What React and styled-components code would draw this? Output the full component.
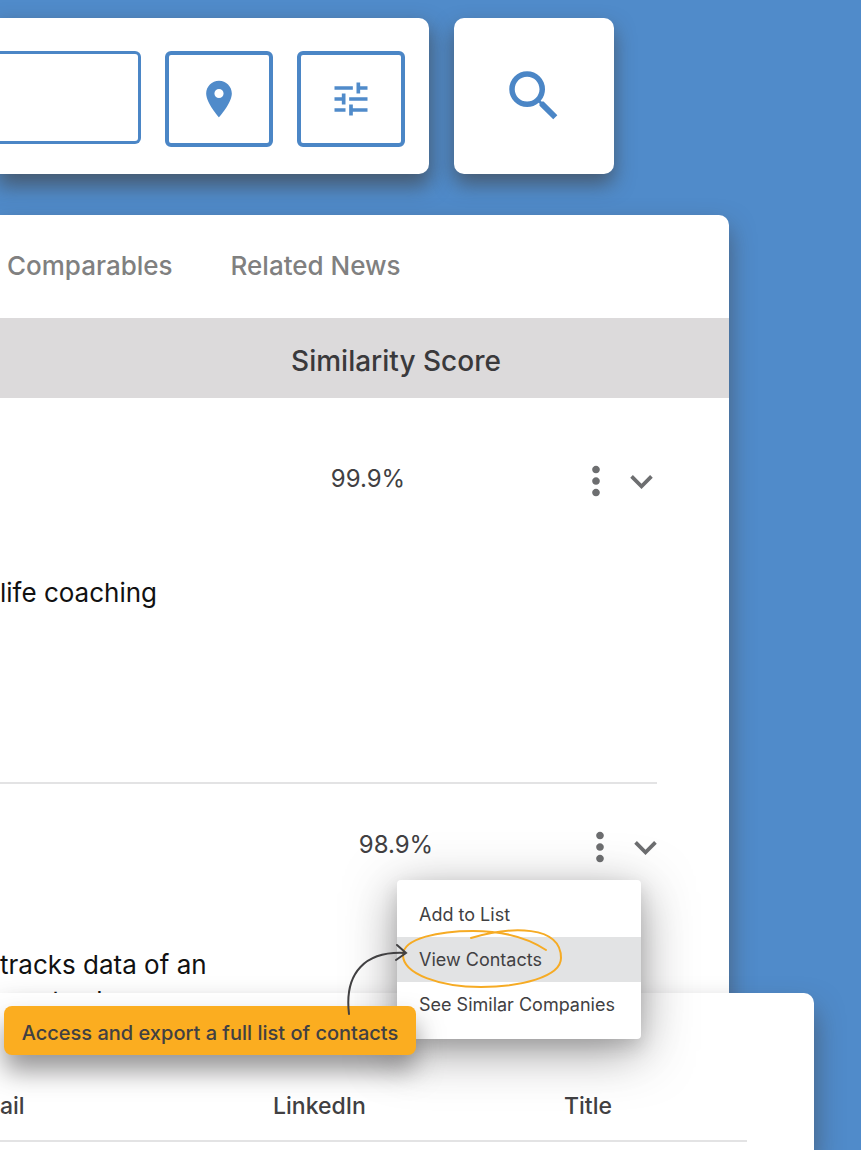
import React from 'react';
import styled, { createGlobalStyle } from 'styled-components';
import { MdLocationOn, MdTune, MdSearch, MdMoreVert, MdExpandMore } from 'react-icons/md';

const blue = '#4b86c6';
const ink = '#414042';

const GlobalStyle = createGlobalStyle`
    * {
        box-sizing: border-box;
    }

    body {
        margin: 0;
        background: #508bca;
        color: ${ink};
        font-family: Inter, "Liberation Sans", sans-serif;
        font-size: 24px;
    }

    button, input {
        font: inherit;
        color: inherit;
    }

    button {
        cursor: pointer;
    }
`;

const Page = styled.div`
    min-height: 100vh;
    padding-top: 18px;
    overflow: hidden;
`;

const SearchRow = styled.form`
    display: flex;
    gap: 25px;
    margin-right: 247px;
    height: 156px;
`;

const SearchCard = styled.div`
    flex: 1;
    min-width: 0;
    display: flex;
    align-items: flex-start;
    gap: 24px;
    padding: 33px 24px 0 0;
    background: #fff;
    border-radius: 0 10px 10px 0;
    box-shadow: 0 10px 20px 2px rgba(65, 64, 66, 0.65);
`;

const SearchInput = styled.input`
    flex: 1;
    min-width: 0;
    height: 93px;
    padding: 0 16px;
    border: 3px solid ${blue};
    border-left: 0;
    border-radius: 0 6px 6px 0;
    background: #fff;
`;

const OutlineButton = styled.button`
    flex: none;
    display: flex;
    align-items: center;
    justify-content: center;
    width: 108px;
    height: 96px;
    padding: 0;
    border: 4px solid ${blue};
    border-radius: 6px;
    background: #fff;
    color: #508bca;
`;

const SearchButton = styled.button`
    flex: none;
    display: flex;
    align-items: center;
    justify-content: center;
    width: 160px;
    padding: 0;
    border: 0;
    border-radius: 10px;
    background: #fff;
    color: ${blue};
    box-shadow: 0 10px 20px rgba(65, 64, 66, 0.65);
`;

const Results = styled.section`
    margin: 41px 132px 0 0;
    height: 820px;
    background: #fff;
    border-radius: 0 10px 0 0;
    box-shadow: 0 12px 24px rgba(65, 64, 66, 0.6);
`;

const Tabs = styled.nav`
    display: flex;
    align-items: center;
    gap: 58px;
    height: 103px;
    padding: 0 0 2px 7px;
`;

const Tab = styled.a`
    color: #808080;
    font-size: 26px;
    font-weight: 500;
    text-decoration: none;
`;

const ResultsTable = styled.table`
    width: 100%;
    border-collapse: collapse;
    table-layout: fixed;
`;

const HeadCell = styled.th`
    width: ${props => props.$width || 'auto'};
    height: 80px;
    padding: 6px 0 0;
    background: #dcdadb;
    color: #3a393b;
    font-size: 28px;
    font-weight: 500;
    white-space: nowrap;
`;

const Cell = styled.td`
    position: relative;
    height: 385px;
    padding: 0;
    vertical-align: top;
    border-bottom: ${props => props.$plain ? '0' : '2px solid #e3e3e4'};
`;

const Description = styled.p`
    margin: 0;
    padding-top: ${props => props.$top};
    color: #111;
    font-size: 26px;
    line-height: 36px;
    white-space: nowrap;
`;

const Score = styled.div`
    padding-top: ${props => props.$top};
    padding-right: ${props => props.$inset || '0'};
    font-size: 24px;
    line-height: 38px;
    text-align: center;
`;

const RowActions = styled.div`
    display: flex;
    justify-content: flex-end;
    align-items: center;
    padding-top: ${props => props.$top};
    margin-right: ${props => props.$bleed};
`;

const IconButton = styled.button`
    display: flex;
    padding: 0;
    border: 0;
    background: none;
    color: #6d6e70;
`;

const Menu = styled.div`
    position: absolute;
    z-index: 2;
    top: 96px;
    right: 16px;
    width: 244px;
    padding: 12px 0;
    background: #fff;
    border-radius: 4px;
    box-shadow: 0 12px 50px rgba(65, 64, 66, 0.55), 0 8px 16px rgba(65, 64, 66, 0.15);
`;

const MenuItem = styled.button`
    position: relative;
    display: block;
    width: 100%;
    height: 45px;
    padding: 0 22px;
    border: 0;
    background: ${props => props.$active ? '#e2e3e4' : 'none'};
    font-size: 18px;
    text-align: left;
    white-space: nowrap;
`;

const Circled = styled.svg`
    position: absolute;
    top: -8px;
    left: 4px;
    overflow: visible;
    pointer-events: none;
`;

const Callout = styled.div`
    position: absolute;
    z-index: 3;
    top: 126px;
    right: 225px;
    display: flex;
    align-items: center;
    justify-content: center;
    width: 412px;
    height: 49px;
    padding-top: 4px;
    border-radius: 8px;
    background: #fbad20;
    font-size: 20px;
    font-weight: 500;
    white-space: nowrap;
    box-shadow: 0 16px 26px rgba(65, 64, 66, 0.55);
`;

const Arrow = styled.svg`
    position: absolute;
    right: 6px;
    bottom: 40px;
`;

const Contacts = styled.section`
    position: relative;
    z-index: 1;
    min-height: 157px;
    margin: -42px 47px 0 0;
    padding: 75px 67px 0 0;
    background: #fff;
    border-radius: 0 10px 0 0;
    box-shadow: 0 16px 28px rgba(65, 64, 66, 0.6);
`;

const ContactsTable = styled.table`
    width: 100%;
    border-collapse: collapse;
    table-layout: fixed;
    border-bottom: 2px solid #e3e3e4;
`;

const ContactHead = styled.th`
    width: ${props => props.$width || 'auto'};
    height: 73px;
    padding: 4px 0 0;
    font-size: 23px;
    font-weight: 500;
    text-align: left;
`;

function ActionsMenu() {
    return (
        <Menu>
            <MenuItem type="button">Add to List</MenuItem>
            <MenuItem type="button" $active>
                View Contacts
                <Circled width="160" height="60" viewBox="0 0 160 60" fill="none" stroke="#f6ab24" strokeWidth="2" strokeLinecap="round" aria-hidden="true">
                    <path d="M70 9C110 -3 160 -4 160 29C160 48 119 58 80 58C39 58 2 45 2 26C2 9 39 2 72 2C102 2 127 9 145 21" />
                </Circled>
            </MenuItem>
            <MenuItem type="button">See Similar Companies</MenuItem>
            <Callout role="note">
                Access and export a full list of contacts
                <Arrow width="64" height="72" viewBox="0 0 64 72" fill="none" stroke={ink} strokeWidth="2" strokeLinecap="round" aria-hidden="true">
                    <path d="M3 71C-2 29 20 8 59 10M51 2L60 10L50 17" />
                </Arrow>
            </Callout>
        </Menu>
    );
}

function Actions(props) {
    return (
        <RowActions $top={props.top} $bleed={props.bleed}>
            <IconButton type="button" aria-label="Row actions"><MdMoreVert size={46} /></IconButton>
            <IconButton type="button" aria-label="Expand row"><MdExpandMore size={45} /></IconButton>
        </RowActions>
    );
}

export default function App() {
    return (
        <Page>
            <GlobalStyle />
            <SearchRow onSubmit={event => event.preventDefault()}>
                <SearchCard>
                    <SearchInput type="text" aria-label="Search" />
                    <OutlineButton type="button" aria-label="Location"><MdLocationOn size={44} /></OutlineButton>
                    <OutlineButton type="button" aria-label="Filters"><MdTune size={44} /></OutlineButton>
                </SearchCard>
                <SearchButton type="submit" aria-label="Run search"><MdSearch size={66} /></SearchButton>
            </SearchRow>
            <Results>
                <Tabs>
                    <Tab href="#comparables">Comparables</Tab>
                    <Tab href="#news">Related News</Tab>
                </Tabs>
                <ResultsTable>
                    <thead>
                        <tr>
                            <HeadCell />
                            <HeadCell $width="272px" scope="col">Similarity Score</HeadCell>
                            <HeadCell $width="125px" />
                            <HeadCell $width="72px" />
                        </tr>
                    </thead>
                    <tbody>
                        <tr>
                            <Cell><Description $top="177px">life coaching</Description></Cell>
                            <Cell><Score $top="62px" $inset="56px">99.9%</Score></Cell>
                            <Cell><Actions top="60px" bleed="-7px" /></Cell>
                            <Cell $plain />
                        </tr>
                        <tr>
                            <Cell $plain>
                                <Description $top="163px">tracks data of an<br />most sales</Description>
                            </Cell>
                            <Cell $plain><Score $top="42px">98.9%</Score></Cell>
                            <Cell $plain>
                                <Actions top="40px" bleed="-11px" />
                                <ActionsMenu />
                            </Cell>
                            <Cell $plain />
                        </tr>
                    </tbody>
                </ResultsTable>
            </Results>
            <Contacts>
                <ContactsTable>
                    <thead>
                        <tr>
                            <ContactHead scope="col">ail</ContactHead>
                            <ContactHead $width="291px" scope="col">LinkedIn</ContactHead>
                            <ContactHead $width="183px" scope="col">Title</ContactHead>
                        </tr>
                    </thead>
                </ContactsTable>
            </Contacts>
        </Page>
    );
}
